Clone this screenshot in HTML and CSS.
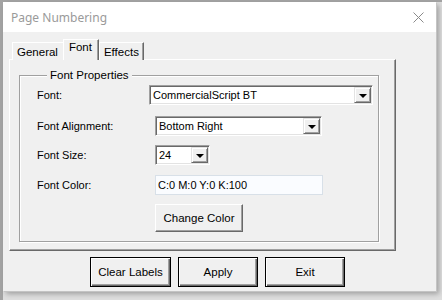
FILE: index.html
```html
<!DOCTYPE html>
<html lang="en">
<head>
    <meta charset="UTF-8">
    <title>Page Numbering</title>
    <link rel="stylesheet" href="styles.css">
</head>
<body>
    <div class="window">
        <div class="titlebar">
            <span class="title">Page Numbering</span>
            <svg class="closex" width="11" height="11" viewBox="0 0 11 11">
                <path d="M0.5 0.5 L10.5 10.5 M10.5 0.5 L0.5 10.5" stroke="#8a8a8a" stroke-width="1" fill="none"/>
            </svg>
        </div>
        <div class="content">
            <div class="tabs">
                <div class="tab general">General</div>
                <div class="tab active">Font</div>
                <div class="tab">Effects</div>
            </div>
            <div class="panel">
                <fieldset class="group">
                    <legend>Font Properties</legend>
                    <div class="row first">
                        <span class="label">Font:</span>
                        <div class="combo wide">
                            <span class="value">CommercialScript BT</span>
                            <span class="drop"><i class="tri"></i></span>
                        </div>
                    </div>
                    <div class="row gap11">
                        <span class="label">Font Alignment:</span>
                        <div class="combo indent align">
                            <span class="value">Bottom Right</span>
                            <span class="drop"><i class="tri"></i></span>
                        </div>
                    </div>
                    <div class="row gap9">
                        <span class="label">Font Size:</span>
                        <div class="combo indent size">
                            <span class="value">24</span>
                            <span class="drop"><i class="tri"></i></span>
                        </div>
                    </div>
                    <div class="row gap10">
                        <span class="label">Font Color:</span>
                        <div class="textbox indent">C:0 M:0 Y:0 K:100</div>
                    </div>
                    <div class="row gap9 tall">
                        <span class="label"></span>
                        <button class="btn change" type="button">Change Color</button>
                    </div>
                </fieldset>
            </div>
            <div class="actions">
                <button class="btn dark clear" type="button">Clear Labels</button>
                <button class="btn dark" type="button">Apply</button>
                <button class="btn dark" type="button">Exit</button>
            </div>
        </div>
    </div>
</body>
</html>
```

FILE: styles.css
```css
html, body
{
    margin: 0;
    height: 300px;
    overflow: hidden;
}
body
{
    padding: 2px 0 0 3px;
    box-sizing: border-box;
    background:
        linear-gradient(#a3a3a3, #a3a3a3) left top / 3px 100% no-repeat,
        linear-gradient(#a3a3a3, #a3a3a3) left top / 100% 2px no-repeat,
        #dedede;
    font-family: "Liberation Sans", Arial, sans-serif;
    font-size: 11px;
    color: #000;
}
.window
{
    width: 433px;
    height: 289px;
    background: #f0f0f0;
    box-shadow: 1px 1px 0 #c4c4c4, 3px 3px 5px rgba(0, 0, 0, 0.28);
}
.titlebar
{
    height: 30px;
    background: #fff;
    display: flex;
    align-items: center;
    justify-content: space-between;
    padding: 0 12px 0 8px;
}
.title
{
    font-family: "Noto Sans", sans-serif;
    font-size: 12px;
    color: #9a9a9a;
}
.closex
{
    margin-top: 1px;
}
.content
{
    padding: 8px 0 0 6px;
}

/* tabs */
.tabs
{
    display: flex;
    align-items: flex-end;
    height: 20px;
    padding-left: 3px;
    margin-bottom: -1px;
    position: relative;
    z-index: 1;
}
.tab
{
    box-sizing: border-box;
    height: 18px;
    padding: 2px 4px 0 4px;
    border-top: 1px solid #fff;
    border-left: 1px solid #fff;
    border-right: 1px solid #696969;
    box-shadow: inset -1px 0 0 #a0a0a0;
    background: #f0f0f0;
    font-size: 11.5px;
    line-height: 14px;
}
.tab.general
{
    padding-right: 6px;
}
.tab.active
{
    position: relative;
    z-index: 1;
    height: 21px;
    margin-left: -2px;
    padding: 0 6px 0 5px;
}
.panel
{
    box-sizing: border-box;
    width: 387px;
    height: 192px;
    border: 1px solid;
    border-color: #fff #696969 #696969 #fff;
    box-shadow: inset -1px -1px 0 #a0a0a0;
    padding: 8px 0 0 9px;
}

/* group box */
.group
{
    box-sizing: border-box;
    width: 360px;
    height: 174px;
    margin: 0;
    padding: 0 0 0 17px;
    border: 1px solid #a0a0a0;
    box-shadow: 1px 1px 0 #fff, inset 1px 1px 0 #fff;
}
.group legend
{
    margin-left: 10px;
    padding: 0 3px;
    font-size: 11.5px;
    line-height: 14px;
    background: #f0f0f0;
}
.row
{
    display: flex;
    align-items: center;
    height: 20px;
}
.row.first { margin-top: 3px; }
.row.gap11 { margin-top: 11px; }
.row.gap10 { margin-top: 10px; }
.row.gap9 { margin-top: 9px; }
.row.tall { height: 28px; }
.label
{
    width: 112px;
    flex: none;
}
.indent
{
    margin-left: 6px;
}

/* combo boxes */
.combo
{
    box-sizing: border-box;
    height: 20px;
    display: flex;
    align-items: stretch;
    background: #fff;
    border: 1px solid;
    border-color: #a0a0a0 #fff #fff #a0a0a0;
    box-shadow: inset 1px 1px 0 #696969, inset -1px -1px 0 #e3e3e3;
    padding: 1px;
}
.combo.wide { width: 224px; }
.combo.align { width: 167px; }
.combo.size { width: 55px; }
.value
{
    flex: 1;
    padding-left: 2px;
    line-height: 16px;
    white-space: nowrap;
    overflow: hidden;
}
.drop
{
    box-sizing: border-box;
    width: 17px;
    flex: none;
    display: flex;
    align-items: center;
    justify-content: center;
    background: #f0f0f0;
    border: 1px solid;
    border-color: #e3e3e3 #696969 #696969 #e3e3e3;
    box-shadow: inset 1px 1px 0 #fff, inset -1px -1px 0 #a0a0a0;
}
.tri
{
    width: 0;
    height: 0;
    border-left: 4px solid transparent;
    border-right: 4px solid transparent;
    border-top: 4px solid #000;
    margin-top: 1px;
}

.textbox
{
    box-sizing: border-box;
    width: 168px;
    height: 20px;
    border: 1px solid #d8e0e8;
    background: #fafcff;
    padding-left: 2px;
    line-height: 18px;
}

/* buttons */
.btn
{
    box-sizing: border-box;
    height: 28px;
    margin: 0;
    padding: 0;
    font-family: "Liberation Sans", Arial, sans-serif;
    font-size: 11.5px;
    color: #000;
    background: #f0f0f0;
    border: 1px solid;
    border-color: #fff #696969 #696969 #fff;
    box-shadow: inset -1px -1px 0 #a0a0a0;
}
.btn.change
{
    width: 88px;
    margin-left: 6px;
}
.actions
{
    display: flex;
    gap: 7px;
    margin: 6px 0 0 81px;
}
.btn.dark
{
    width: 80px;
    height: 30px;
    border: 1px solid #000;
    box-shadow: inset 1px 1px 0 #fff, inset -1px -1px 0 #696969, inset -2px -2px 0 #a0a0a0;
}
.btn.clear
{
    width: 81px;
}
```
